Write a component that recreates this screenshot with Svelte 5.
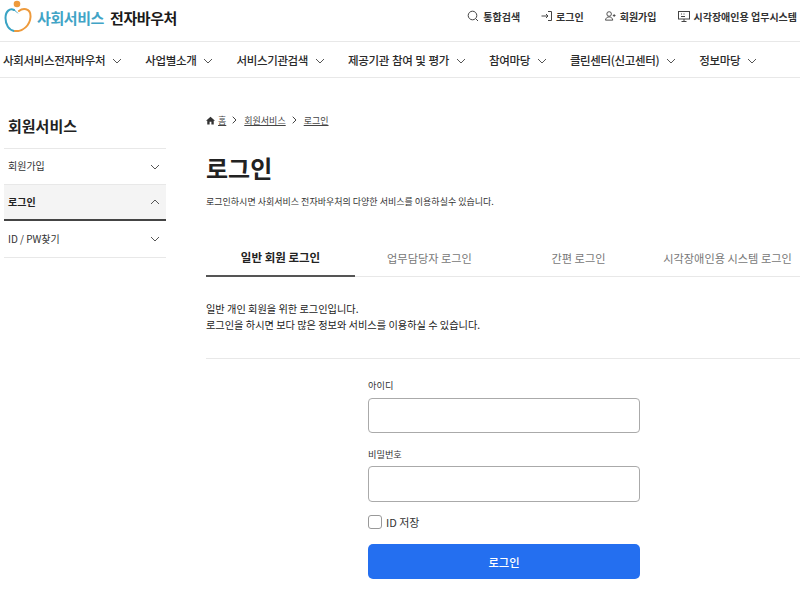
<script>
  const topLinks = [
    { label: "통합검색", icon: "search" },
    { label: "로그인", icon: "login" },
    { label: "회원가입", icon: "join" },
    { label: "시각장애인용 업무시스템", icon: "monitor" }
  ];
  const gnb = ["사회서비스전자바우처", "사업별소개", "서비스기관검색", "제공기관 참여 및 평가", "참여마당", "클린센터(신고센터)", "정보마당"];
  const side = [
    { label: "회원가입", open: false },
    { label: "로그인", open: true },
    { label: "ID / PW찾기", open: false }
  ];
  const tabs = ["일반 회원 로그인", "업무담당자 로그인", "간편 로그인", "시각장애인용 시스템 로그인"];
</script>

<div class="page">
  <header class="top">
    <a class="logo" href="#top">
      <svg width="28" height="33" viewBox="0 0 28 33" fill="none">
        <circle cx="13" cy="5" r="3.3" fill="#ee9a3c" />
        <path d="M10 11C6 9 1.500 12 1.500 19 1.500 26 5 31 10 32" stroke="#3aa3c4" stroke-width="2" stroke-linecap="round" />
        <path d="M10 11c1.500.5 2.500 2 3.500 3" stroke="#3aa3c4" stroke-width="1" stroke-linecap="round" />
        <path d="M15 12C18 9.500 27 8 26.500 18 26 26 19 33 11 32" stroke="#ee9a3c" stroke-width="2" stroke-linecap="round" />
      </svg>
      <span class="logo-a">사회서비스</span>
      <span class="logo-b">전자바우처</span>
    </a>
    <nav class="util">
      {#each topLinks as link}
        <a href="#top">
          {#if link.icon === "search"}
            <svg width="12" height="12" viewBox="0 0 12 12" fill="none" stroke="#444" stroke-width="1"><circle cx="5.500" cy="5.500" r="4.300" /><path d="M8.700 8.700 11 11" /></svg>
          {:else if link.icon === "login"}
            <svg width="11" height="12" viewBox="0 0 11 12" fill="none" stroke="#444" stroke-width="1"><path d="M7 1.500h3.500v9H7M.5 6h6.500M5 4l2 2-2 2" /></svg>
          {:else if link.icon === "join"}
            <svg width="11" height="12" viewBox="0 0 12 12" fill="none" stroke="#444" stroke-width="1"><circle cx="4.500" cy="3.800" r="2.500" /><path d="M.5 10.500c.5-2.500 2-3.500 4-3.500s3.500 1 4 3.500zM10 4v3M8.500 5.500h3" /></svg>
          {:else}
            <svg width="12" height="13" viewBox="0 0 12 13" fill="none" stroke="#444" stroke-width="1"><rect x=".5" y="1.500" width="11" height="7.500" /><path d="M6 9v2.500M3.500 11.500h5M3 4h1M5.500 4h1M3 6.500h4" /></svg>
          {/if}
          <span>{link.label}</span>
        </a>
      {/each}
    </nav>
  </header>

  <nav class="gnb">
    {#each gnb as item}
      <a href="#top">
        <span>{item}</span>
        <svg class="chev" width="10" height="6" viewBox="0 0 10 6" fill="none" stroke="#555" stroke-width="1"><path d="M1 1l4 4 4-4" /></svg>
      </a>
    {/each}
  </nav>

  <div class="body">
    <aside class="side">
      <h2>회원서비스</h2>
      <ul>
        {#each side as row, i}
          <li class:active={row.open} class:last={i === side.length - 1}>
            <span>{row.label}</span>
            <svg width="10" height="6" viewBox="0 0 10 6" fill="none" stroke="#555" stroke-width="1">
              <path d={row.open ? "M1 5l4-4 4 4" : "M1 1l4 4 4-4"} />
            </svg>
          </li>
        {/each}
      </ul>
    </aside>

    <main class="main">
      <div class="crumbs">
        <svg width="9" height="9" viewBox="0 0 10 10" fill="#333"><path d="M5 .8 0 5.200h1.400V9.500h2.600V6.500h2v3h2.600V5.200H10z" /></svg>
        <a href="#top">홈</a>
        <svg class="sep" width="5" height="8" viewBox="0 0 5 8" fill="none" stroke="#444"><path d="M.7.7 4 4 .7 7.300" /></svg>
        <a href="#top">회원서비스</a>
        <svg class="sep" width="5" height="8" viewBox="0 0 5 8" fill="none" stroke="#444"><path d="M.7.7 4 4 .7 7.300" /></svg>
        <a href="#top">로그인</a>
      </div>

      <h1>로그인</h1>
      <p class="lead">로그인하시면 사회서비스 전자바우처의 다양한 서비스를 이용하실수 있습니다.</p>

      <div class="tabs">
        {#each tabs as tab, i}
          <button class:on={i === 0}>{tab}</button>
        {/each}
      </div>

      <p class="intro">일반 개인 회원을 위한 로그인입니다.<br />로그인을 하시면 보다 많은 정보와 서비스를 이용하실 수 있습니다.</p>

      <form class="form" onsubmit={(e) => e.preventDefault()}>
        <label for="uid">아이디</label>
        <input id="uid" type="text" />
        <label for="upw" class="second">비밀번호</label>
        <input id="upw" class="pw" type="password" />
        <label class="save"><span class="box"></span>ID 저장</label>
        <button class="submit" type="submit">로그인</button>
      </form>
    </main>
  </div>
</div>

<style>
  :global(body) {
    margin: 0;
    background: #fff;
    color: #222;
    font-family: "Noto Sans CJK KR", "Noto Sans", sans-serif;
  }

  a {
    color: inherit;
    text-decoration: none;
  }

  .page {
    width: 800px;
    height: 592px;
    overflow: hidden;
  }

  .top {
    box-sizing: border-box;
    height: 42px;
    display: flex;
    justify-content: space-between;
    align-items: center;
    border-bottom: 1px solid #e8e8e8;
    padding: 0 3px 0 4px;
  }

  .logo {
    display: flex;
    align-items: center;
    font-size: 15px;
    font-weight: 700;
    letter-spacing: -0.4px;
    height: 34px;
    margin-bottom: 7px;
  }

  .logo svg {
    margin: 0 5px 3px 0;
    flex: none;
  }

  .logo-a {
    color: #41a4c6;
    margin-right: 6px;
  }

  .logo-b {
    color: #1a1a1a;
  }

  .util {
    display: flex;
    gap: 21px;
    font-size: 10px;
    font-weight: 700;
    color: #333;
    margin-top: -9px;
  }

  .util a {
    display: flex;
    align-items: center;
    gap: 4px;
  }

  .gnb {
    box-sizing: border-box;
    height: 36px;
    display: flex;
    align-items: center;
    gap: 23px;
    padding-left: 3px;
    border-bottom: 1px solid #e8e8e8;
    font-size: 11.500px;
    font-weight: 500;
    color: #2a2a2a;
    letter-spacing: -0.35px;
    word-spacing: 0.7px;
    white-space: nowrap;
  }

  .gnb a {
    display: flex;
    align-items: center;
    gap: 7px;
  }

  .chev {
    margin-top: 3px;
  }

  .body {
    display: flex;
    padding-left: 4px;
  }

  .side {
    width: 162px;
    margin-right: 40px;
    flex: none;
  }

  .side h2 {
    margin: 37px 0 0 4px;
    height: 33px;
    font-size: 15px;
    font-weight: 700;
    line-height: 22px;
    color: #222;
  }

  .side ul {
    list-style: none;
    margin: 0;
    padding: 0;
    border-top: 1px solid #e8e8e8;
  }

  .side li {
    box-sizing: border-box;
    height: 36px;
    display: flex;
    align-items: center;
    justify-content: space-between;
    padding: 0 6px 0 4px;
    font-size: 10px;
    color: #333;
    border-bottom: 1px solid #e8e8e8;
  }

  .side li span {
    margin-bottom: 2px;
  }

  .side li.last {
    height: 37px;
  }

  .side li.active {
    background: #f4f4f4;
    font-weight: 700;
    color: #222;
    border-bottom: 2px solid #444;
  }

  .main {
    flex: 1;
    min-width: 0;
  }

  .crumbs {
    margin-top: 35px;
    height: 14px;
    display: flex;
    align-items: center;
    font-size: 9px;
    color: #444;
  }

  .crumbs a {
    text-decoration: underline;
    margin-left: 3px;
  }

  .crumbs .sep {
    margin: 0 4px 0 6px;
  }

  h1 {
    margin: 23px 0 0;
    font-size: 24px;
    font-weight: 700;
    line-height: 36px;
    color: #222;
  }

  .lead {
    margin: 9px 0 0;
    font-size: 9px;
    line-height: 14px;
    color: #333;
  }

  .tabs {
    box-sizing: border-box;
    margin-top: 30px;
    display: flex;
    height: 38px;
    border-bottom: 1px solid #e8e8e8;
  }

  .tabs button {
    box-sizing: border-box;
    width: 149px;
    height: 37px;
    flex: none;
    border: 0;
    background: none;
    padding: 0;
    margin: 0;
    font: inherit;
    font-size: 11.200px;
    color: #777;
    white-space: nowrap;
  }

  .tabs button.on {
    color: #222;
    font-size: 11.500px;
    font-weight: 700;
    border-bottom: 2px solid #555;
    height: 38px;
  }

  .intro {
    margin: 24px 0 0;
    padding-bottom: 25px;
    font-size: 10.200px;
    line-height: 16px;
    color: #222;
    border-bottom: 1px solid #e8e8e8;
  }

  .form {
    width: 272px;
    margin: 19px 0 0 162px;
    display: flex;
    flex-direction: column;
  }

  .form label {
    font-size: 9.200px;
    line-height: 14px;
    color: #333;
  }

  .form label.second {
    margin-top: 14px;
  }

  .form input {
    box-sizing: border-box;
    height: 35px;
    width: 100%;
    margin: 6px 0 0;
    border: 1px solid #aaa;
    border-radius: 4px;
    background: #fff;
    outline: none;
  }

  .form input.pw {
    height: 36px;
    margin-top: 5px;
  }

  .form .save {
    display: flex;
    align-items: center;
    gap: 4px;
    margin-top: 13px;
    font-size: 11px;
    line-height: 14px;
  }

  .box {
    box-sizing: border-box;
    width: 14px;
    height: 14px;
    border: 1px solid #999;
    border-radius: 3px;
    background: #fff;
  }

  .submit {
    height: 35px;
    margin-top: 15px;
    border: 0;
    border-radius: 5px;
    background: #246ff0;
    color: #fff;
    font: inherit;
    font-size: 11.300px;
    font-weight: 500;
  }
</style>
